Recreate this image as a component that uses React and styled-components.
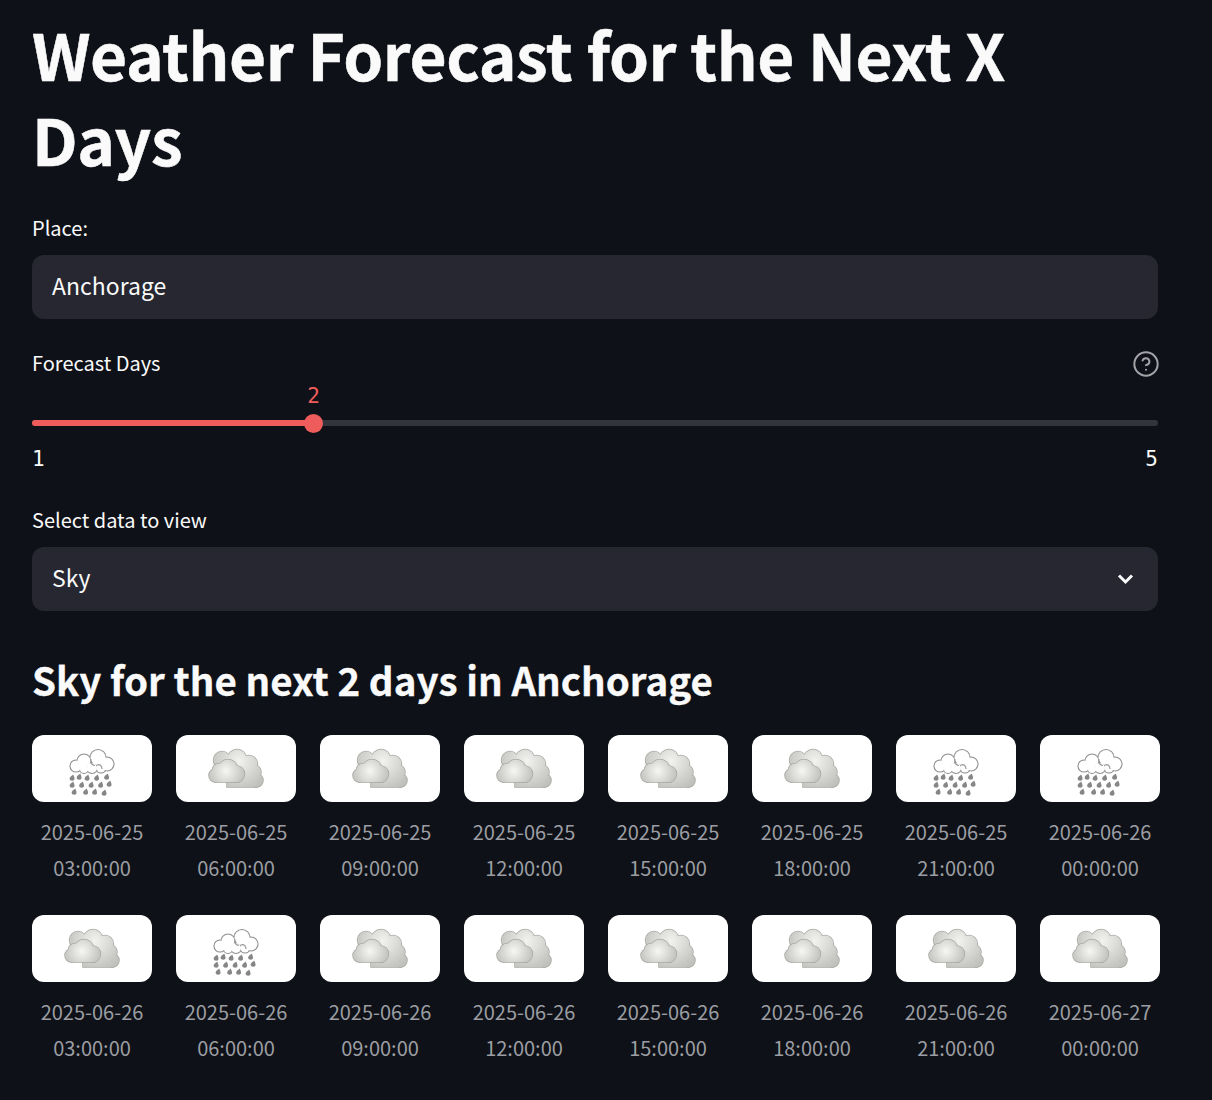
import React from 'react';
import styled, { createGlobalStyle } from 'styled-components';
import { CircleHelp } from 'lucide-react';

const GlobalStyle = createGlobalStyle`
    html, body {
        margin: 0;
        padding: 0;
        background: #0e1117;
    }
    body {
        font-family: "Noto Sans CJK SC", "Noto Sans", sans-serif;
        color: #fafafa;
    }
`

const Page = styled.div`
    width: 1126px;
    height: 1100px;
    padding: 11px 0 0 32px;
`

const Title = styled.h1`
    margin: 0 0 33px;
    font-size: 64px;
    line-height: 85px;
    font-weight: 700;
    letter-spacing: -0.45px;
    -webkit-text-stroke: 0.5px #fafafa;
    color: #fafafa;
`

const Field = styled.div`
    margin-bottom: 30px;
`

const LabelRow = styled.div`
    display: flex;
    align-items: center;
    justify-content: space-between;
    height: 30px;
    margin-bottom: 11px;
    font-size: 20px;
    line-height: 27px;
`

const LabelText = styled.span`
    margin-top: -3px;
`

const HelpIcon = styled(CircleHelp)`
    display: block;
    margin-right: -2px;
    color: #a3a3a8;
`

const Input = styled.div`
    display: flex;
    align-items: center;
    justify-content: space-between;
    height: 64px;
    padding: 0 20px;
    box-sizing: border-box;
    border-radius: 12px;
    background: #262730;
    font-size: 23px;
`

const InputText = styled.span`
    margin-top: -4px;
`

const SliderArea = styled.div`
    position: relative;
    height: 91px;
    margin-top: -5px;
`

const Track = styled.div`
    position: absolute;
    top: 35px;
    left: 0;
    right: 0;
    height: 6px;
    border-radius: 3px;
    background: #33353d;
`

const TrackFill = styled.div`
    height: 100%;
    border-radius: 3px;
    background: #ee5c5c;
`

const Thumb = styled.div`
    position: absolute;
    top: 29px;
    width: 19px;
    height: 19px;
    margin-left: -9.5px;
    border-radius: 50%;
    background: #ee5c5c;
`

const ThumbValue = styled.div`
    position: absolute;
    top: -4px;
    transform: translateX(-50%);
    font-family: "DejaVu Sans Mono", "Liberation Mono", monospace;
    font-size: 21px;
    line-height: 30px;
    color: #ee5c5c;
`

const Bounds = styled.div`
    position: absolute;
    top: 59px;
    left: 0;
    right: 0;
    display: flex;
    justify-content: space-between;
    font-family: "DejaVu Sans Mono", "Liberation Mono", monospace;
    font-size: 21px;
    line-height: 30px;
`

const Heading = styled.h3`
    margin: 41px 0 29px;
    font-size: 38.5px;
    line-height: 54px;
    font-weight: 700;
    -webkit-text-stroke: 0.3px #fafafa;
    color: #fafafa;
`

const Gallery = styled.div`
    display: grid;
    grid-template-columns: repeat(8, 120px);
    column-gap: 24px;
    row-gap: 29px;
`

const Tile = styled.div`
    display: flex;
    flex-direction: column;
    align-items: center;
`

const Card = styled.div`
    display: flex;
    justify-content: center;
    width: 120px;
    height: 67px;
    border-radius: 12px;
    background: #ffffff;
`

const Caption = styled.div`
    margin-top: 12px;
    font-size: 20px;
    line-height: 36px;
    text-align: center;
    color: #9c9ea3;
`

const RAIN_DROPS = [
    [13, 43], [20, 42], [28, 43], [37.5, 43], [47.5, 42],
    [13, 50], [22.5, 50], [32, 50], [41.5, 50], [50, 49],
    [15, 57], [26.5, 57], [35.5, 57], [45, 58],
];

const BACK_LOBES = [[19, 25, 8.5], [34, 24, 9.5], [46, 29, 8.5], [51, 37, 7], [53.5, 45.5, 6.5], [40, 38, 12]];
const BACK_BODY = [24, 38, 30, 14];
const FRONT_LOBES = [[12.5, 40.5, 6.5], [16, 35, 6.5], [25, 34, 9.5], [33.5, 39, 8]];
const FRONT_BODY = [12, 38, 24, 9];
const RAIN_LOBES = [[17, 31, 5.5], [25, 26, 6.5], [39, 22.5, 7.5], [48, 29, 6.5], [33, 33, 5], [25, 34, 4], [42, 33, 4.5]];

const Lobes = ({ lobes, body, ...rest }) => (
    <g {...rest}>
        {lobes.map(([cx, cy, r]) => (
            <circle key={`${cx}-${cy}`} cx={cx} cy={cy} r={r} />
        ))}
        {body && <rect x={body[0]} y={body[1]} width={body[2]} height={body[3]} />}
    </g>
);

const CloudIcon = ({ id }) => (
    <svg width="67" height="67" viewBox="0 0 67 67">
        <defs>
            <radialGradient id={`back-${id}`} gradientUnits="userSpaceOnUse" cx="36" cy="26" r="30">
                <stop offset="0" stopColor="#f2f2f0" />
                <stop offset="1" stopColor="#c0c0bc" />
            </radialGradient>
            <radialGradient id={`front-${id}`} gradientUnits="userSpaceOnUse" cx="23" cy="36" r="18">
                <stop offset="0" stopColor="#f6f6f4" />
                <stop offset="1" stopColor="#c4c4c0" />
            </radialGradient>
            <filter id={`soft-${id}`}>
                <feGaussianBlur stdDeviation="0.55" />
            </filter>
        </defs>
        <g filter={`url(#soft-${id})`}>
            <Lobes lobes={BACK_LOBES} body={BACK_BODY} fill="#a8a8a4" stroke="#a8a8a4" strokeWidth="1.5" />
            <Lobes lobes={BACK_LOBES} body={BACK_BODY} fill={`url(#back-${id})`} />
            <Lobes lobes={FRONT_LOBES} body={FRONT_BODY} fill="#a8a8a4" stroke="#a8a8a4" strokeWidth="1.5" />
            <Lobes lobes={FRONT_LOBES} body={FRONT_BODY} fill={`url(#front-${id})`} />
        </g>
    </svg>
);

const RainIcon = ({ id }) => (
    <svg width="67" height="67" viewBox="0 0 67 67">
        <defs>
            <filter id={`soft-${id}`}>
                <feGaussianBlur stdDeviation="0.45" />
            </filter>
        </defs>
        <g filter={`url(#soft-${id})`}>
            <Lobes lobes={RAIN_LOBES} fill="#8e8e8e" stroke="#8e8e8e" strokeWidth="2.2" />
            <Lobes lobes={RAIN_LOBES} fill="#ffffff" />
            <path d="M32 24 C31 28 33 30 36 30.5 M38 30 C41 29 43 31 43 34" fill="none" stroke="#9a9a9a" strokeWidth="1.2" />
            <g fill="#868686">
                {RAIN_DROPS.map(([x, y]) => (
                    <path key={`${x}-${y}`} d={`M${x + 1.2} ${y - 3.5} C${x + 2.4} ${y - 1} ${x + 3} ${y + 0.5} ${x + 2.2} ${y + 2} C${x + 1} ${y + 3.4} ${x - 2.4} ${y + 3} ${x - 2.4} ${y + 0.6} C${x - 2.4} ${y - 1.2} ${x} ${y - 2.2} ${x + 1.2} ${y - 3.5} Z`} />
                ))}
            </g>
        </g>
    </svg>
);

const FORECAST = [
    ['2025-06-25', '03:00:00', 'rain'],
    ['2025-06-25', '06:00:00', 'cloud'],
    ['2025-06-25', '09:00:00', 'cloud'],
    ['2025-06-25', '12:00:00', 'cloud'],
    ['2025-06-25', '15:00:00', 'cloud'],
    ['2025-06-25', '18:00:00', 'cloud'],
    ['2025-06-25', '21:00:00', 'rain'],
    ['2025-06-26', '00:00:00', 'rain'],
    ['2025-06-26', '03:00:00', 'cloud'],
    ['2025-06-26', '06:00:00', 'rain'],
    ['2025-06-26', '09:00:00', 'cloud'],
    ['2025-06-26', '12:00:00', 'cloud'],
    ['2025-06-26', '15:00:00', 'cloud'],
    ['2025-06-26', '18:00:00', 'cloud'],
    ['2025-06-26', '21:00:00', 'cloud'],
    ['2025-06-27', '00:00:00', 'cloud'],
];

const SLIDER_PERCENT = 25;

export default function App() {
    return (
        <Page>
            <GlobalStyle />
            <Title>Weather Forecast for the Next X Days</Title>

            <Field>
                <LabelRow>
                    <LabelText>Place:</LabelText>
                </LabelRow>
                <Input>
                    <InputText>Anchorage</InputText>
                </Input>
            </Field>

            <Field>
                <LabelRow>
                    <LabelText>Forecast Days</LabelText>
                    <HelpIcon size={28} strokeWidth={1.7} />
                </LabelRow>
                <SliderArea>
                    <Track>
                        <TrackFill style={{ width: `${SLIDER_PERCENT}%` }} />
                    </Track>
                    <Thumb style={{ left: `${SLIDER_PERCENT}%` }} />
                    <ThumbValue style={{ left: `${SLIDER_PERCENT}%` }}>2</ThumbValue>
                    <Bounds>
                        <span>1</span>
                        <span>5</span>
                    </Bounds>
                </SliderArea>
            </Field>

            <Field>
                <LabelRow>
                    <LabelText>Select data to view</LabelText>
                </LabelRow>
                <Input>
                    <InputText>Sky</InputText>
                    <svg width="24" height="24" viewBox="0 0 24 24" fill="none" stroke="#fafafa" strokeWidth="3" strokeLinejoin="miter">
                        <polyline points="5,8.5 11.5,15 18,8.5" />
                    </svg>
                </Input>
            </Field>

            <Heading>Sky for the next 2 days in Anchorage</Heading>

            <Gallery>
                {FORECAST.map(([date, time, sky], i) => (
                    <Tile key={`${date}-${time}`}>
                        <Card>
                            {sky === 'rain' ? <RainIcon id={i} /> : <CloudIcon id={i} />}
                        </Card>
                        <Caption>{date}<br />{time}</Caption>
                    </Tile>
                ))}
            </Gallery>
        </Page>
    );
}
